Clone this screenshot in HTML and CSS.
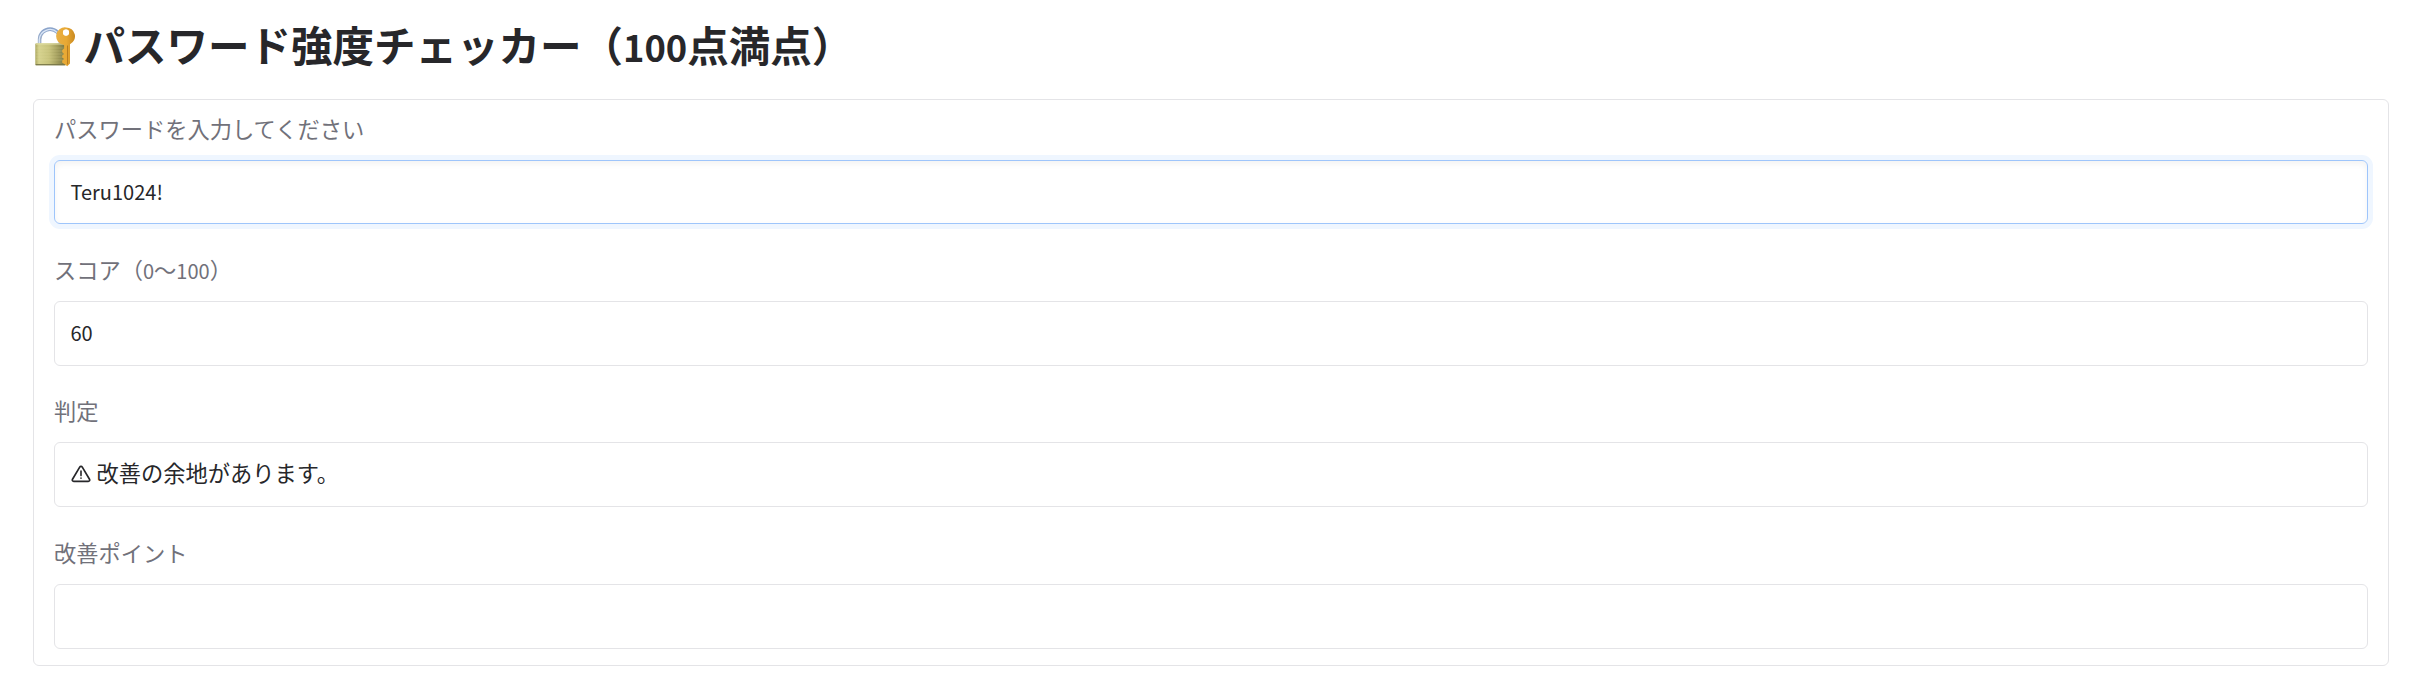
FILE: index.html
```html
<!DOCTYPE html>
<html lang="ja">
<head>
<meta charset="utf-8">
<title>パスワード強度チェッカー</title>
<link rel="stylesheet" href="styles.css">
</head>
<body>
<main class="app">
  <h1 class="title">
    <svg class="lock" viewBox="0 0 40 40" aria-hidden="true">
      <defs>
        <linearGradient id="brass" x1="0" x2="1" y1="0" y2="0">
          <stop offset="0" stop-color="#aaa65d"/><stop offset=".12" stop-color="#d5d28e"/>
          <stop offset=".45" stop-color="#c6c27b"/><stop offset=".7" stop-color="#a5a05f"/><stop offset="1" stop-color="#777440"/>
        </linearGradient>
        <linearGradient id="gold" x1="0" x2="1" y1="0" y2="0">
          <stop offset="0" stop-color="#e9b044"/><stop offset=".55" stop-color="#e8a833"/><stop offset="1" stop-color="#c98a21"/>
        </linearGradient>
        <linearGradient id="steel" x1="0" x2="0" y1="0" y2="1">
          <stop offset="0" stop-color="#8ba4cb"/><stop offset="1" stop-color="#a7b5ca"/>
        </linearGradient>
      </defs>
      <path d="M4.6 18V12.5a10.4 10.4 0 0 1 20.8 0V18" fill="none" stroke="url(#steel)" stroke-width="3.6"/>
      <path d="M4.3 17V12.5a10.7 10.7 0 0 1 18-7" fill="none" stroke="#dbe7f7" stroke-width="1.2"/>
      <rect x=".3" y="16.3" width="30.4" height="22" rx="1.2" fill="url(#brass)"/>
      <path d="M.8 17h29.4" stroke="#e1dea4" stroke-width="1"/>
      <path d="M1 21h29M1 24h29M1 27h29M1 30h29M1 33h29" stroke="#ece9a6" stroke-opacity=".28" stroke-width=".8"/>
      <path d="M.6 37.7h30" stroke="#777548" stroke-width="1.2"/>
      <path fill="url(#gold)" fill-rule="evenodd" d="M31 .4a8.9 8.9 0 0 1 4 16.9V36.5L32.2 39.2l-2.4-1.9-2.6-1.6v-2.2l1.9-1.4-1.9-1.7v-2l1.9-1.5-1.9-1.7v-2.2l1.9-1.4V18.1A8.9 8.9 0 0 1 31 .4ZM31 2.5a3.1 3.1 0 1 0 0 6.2 3.1 3.1 0 0 0 0-6.2Z"/>
      <circle cx="31" cy="5.6" r="3" fill="#fff"/>
      <path d="M32.5 18.5v19" stroke="#b97d20" stroke-width="1"/>
    </svg>
    <span class="title-text">パスワード強度チェッカー（<span class="latin">100</span>点満点）</span>
  </h1>
  <section class="card">
    <div class="field">
      <div class="label">パスワードを入力してください</div>
      <div class="box box-focus"><span class="latin">Teru1024!</span></div>
    </div>
    <div class="field">
      <div class="label">スコア（<span class="latin">0</span>〜<span class="latin">100</span>）</div>
      <div class="box"><span class="latin">60</span></div>
    </div>
    <div class="field">
      <div class="label">判定</div>
      <div class="box">
        <svg class="warn" viewBox="0 0 20 18" fill="none" stroke="#27272a" stroke-linejoin="round" stroke-linecap="round" aria-hidden="true">
          <path d="M8.7 2.1 1.5 14.2c-.6 1.1 0 2.1 1.2 2.1h14.6c1.2 0 1.8-1 1.2-2.1L11.3 2.1c-.6-1-2-1-2.6 0Z" stroke-width="1.7"/>
          <path d="M10 6v4.6M10 13.1v.2" stroke-width="1.6"/>
        </svg>
        <span class="message">改善の余地があります。</span>
      </div>
    </div>
    <div class="field">
      <div class="label">改善ポイント</div>
      <div class="box"></div>
    </div>
  </section>
</main>
</body>
</html>
```
FILE: styles.css
```css
* { box-sizing: border-box; }
body {
  margin: 0;
  background: #fff;
  color: #27272a;
  font-family: "Noto Sans CJK JP", sans-serif;
  font-size: 22.25px;
}
.app { padding: 0 43px 0 33px; }
.title {
  display: flex;
  align-items: center;
  gap: 8.5px;
  height: 99px;
  margin: 0;
  padding: 0 0 5px 2px;
  font-size: 41.5px;
  font-weight: 700;
  line-height: 60px;
  white-space: nowrap;
}
.title-text { padding-bottom: 4px; }
.lock { width: 40px; height: 40px; }
.latin { font-size: .9em; }
.title .latin { font-size: .875em; }
.card {
  display: flex;
  flex-direction: column;
  gap: 17px;
  height: 567px;
  padding: 12px 20px 0;
  border: 1px solid #e4e4e7;
  border-radius: 6px;
}
.field { height: 124px; }
.field:last-child { padding-top: 1px; }
.label {
  height: 48px;
  line-height: 32px;
  color: #71717a;
}
.box {
  display: flex;
  align-items: center;
  gap: 6px;
  height: 65px;
  padding: 0 15.5px 1px;
  border: 1px solid #e4e4e7;
  border-radius: 6px;
  line-height: 32px;
}
.box-focus {
  height: 64px;
  border-color: #9ec5fb;
  box-shadow: 0 0 0 5px #eff6ff, inset 0 3px 6px rgba(0, 0, 0, .05);
}
.message { padding-bottom: 4px; }
.warn { width: 20px; height: 18px; }
```
